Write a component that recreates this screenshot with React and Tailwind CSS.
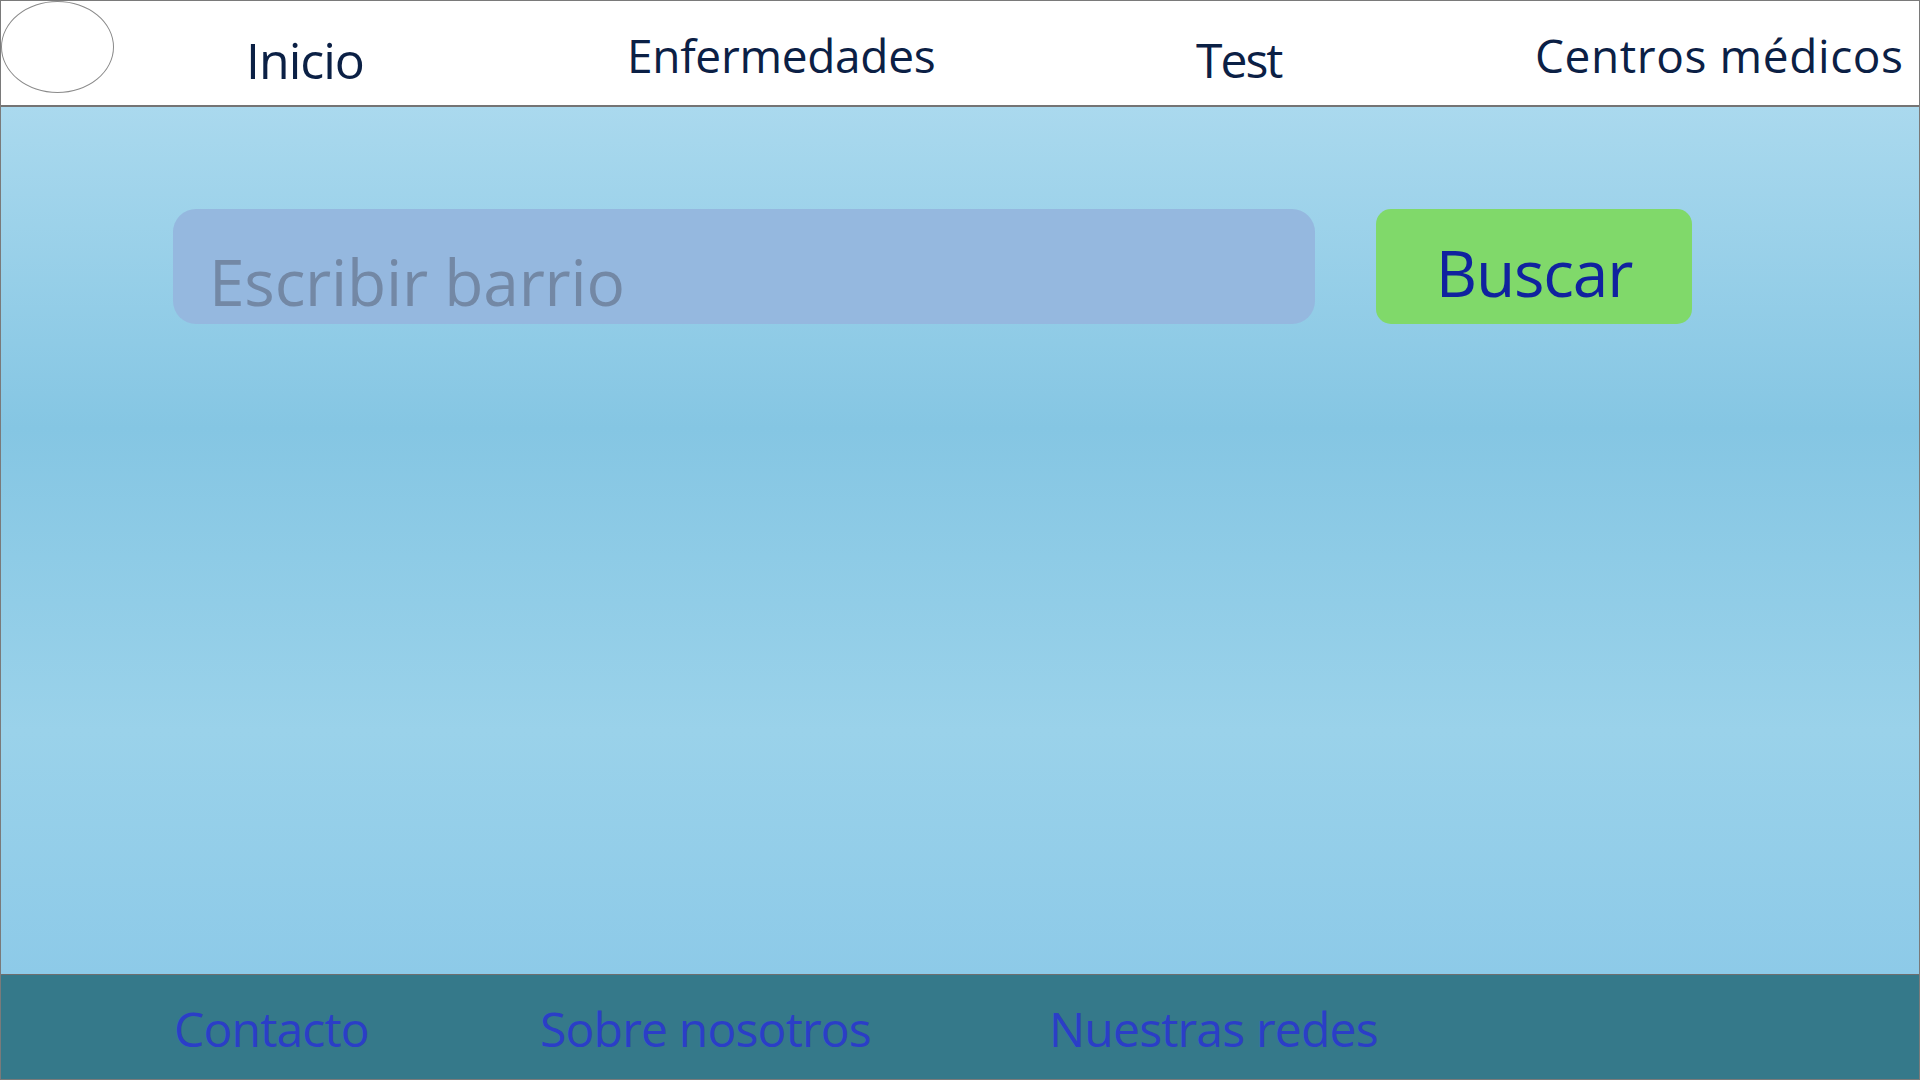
import React from "react";

const navFont = { fontFamily: '"Open Sans", "Noto Sans", sans-serif' };

const App = () => {
  return (
    <div
      className="w-full h-[1080px] flex flex-col border border-[#7a7a7a] bg-white overflow-hidden"
      style={navFont}
    >
      {/* Header */}
      <header className="h-[106px] shrink-0 flex items-start border-b-2 border-[#747474] bg-white text-[#0b2045]">
        <div className="w-[113px] h-[92px] shrink-0 rounded-[50%] border border-[#8a8a8a]" />
        <nav className="flex items-start pl-[132px]">
          <a className="w-[381px] pt-[34px] text-[50px] leading-none tracking-[-1px]">Inicio</a>
          <a className="w-[569px] pt-[31px] text-[46px] leading-none tracking-[-0.3px]">Enfermedades</a>
          <a className="w-[339px] pt-[35px] text-[48px] leading-none tracking-[-2px]">Test</a>
          <a className="pt-[31px] text-[46px] leading-none tracking-[0.6px] whitespace-nowrap">Centros médicos</a>
        </nav>
      </header>

      {/* Main */}
      <main className="flex-1 bg-[linear-gradient(180deg,#aad9ee_0%,#85c6e3_37%,#9ad2ea_72%,#8dcae8_100%)]">
        <div className="flex items-start pt-[102px] pl-[172px] gap-[61px]">
          <input
            type="text"
            placeholder="Escribir barrio"
            className="w-[1142px] h-[115px] rounded-[23px] bg-[#95b8df] pl-[36px] pt-[30px] text-[64px] tracking-[-0.2px] text-[#3b4f6e] placeholder:text-[#7388a5] outline-none"
          />
          <button className="w-[316px] h-[115px] rounded-[15px] bg-[#80d96a] pt-[12px] text-[64px] leading-none tracking-[-1.2px] text-[#10229f]">
            Buscar
          </button>
        </div>
      </main>

      {/* Footer */}
      <footer className="h-[105px] shrink-0 flex items-center pl-[173px] border-t border-[#6e6e6e] bg-[#35798a] text-[#2b3ec7] text-[48px] leading-none tracking-[-0.8px]">
        <a className="w-[366px] pt-[3px]">Contacto</a>
        <a className="w-[509px] pt-[3px]">Sobre nosotros</a>
        <a className="pt-[3px]">Nuestras redes</a>
      </footer>
    </div>
  );
};

export default App;
